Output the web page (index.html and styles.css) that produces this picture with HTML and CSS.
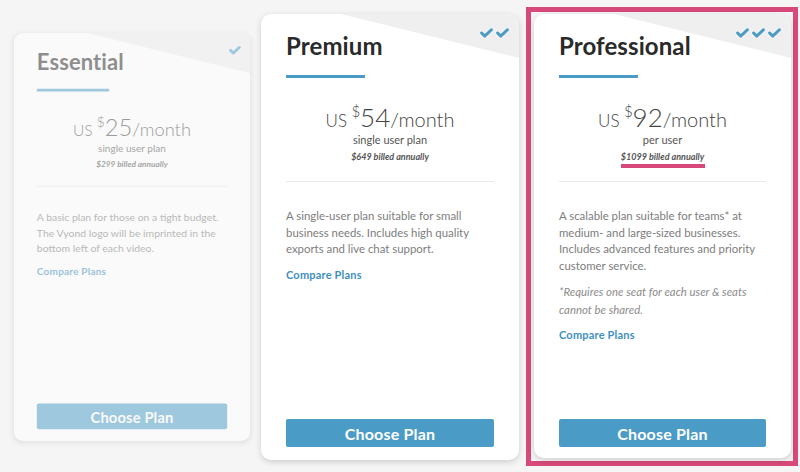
FILE: index.html
```html
<!DOCTYPE html>
<html>
<head>
<meta charset="utf-8">
<link rel="stylesheet" href="styles.css">
</head>
<body>
<div class="plans">
  <div class="card card-faded">
    <div class="corner"></div>
    <div class="checks">
      <svg class="check" viewBox="0 0 12 9"><polyline points="1.5,4.5 4.5,7.3 10.5,1.5"/></svg>
    </div>
    <h2 class="title">Essential</h2>
    <div class="rule"></div>
    <div class="price"><span class="cur">US</span> <span class="dollar">$</span><span class="amount">25</span><span class="per">/month</span></div>
    <div class="sub">single user plan</div>
    <div class="billed"><span>$299 billed annually</span></div>
    <div class="divider"></div>
    <p class="desc">A basic plan for those on a tight budget. The Vyond logo will be imprinted in the bottom left of each video.</p>
    <a class="compare">Compare Plans</a>
    <div class="spacer"></div>
    <button class="btn">Choose Plan</button>
  </div>

  <div class="card">
    <div class="corner"></div>
    <div class="checks">
      <svg class="check" viewBox="0 0 12 9"><polyline points="1.5,4.5 4.5,7.3 10.5,1.5"/></svg>
      <svg class="check" viewBox="0 0 12 9"><polyline points="1.5,4.5 4.5,7.3 10.5,1.5"/></svg>
    </div>
    <h2 class="title">Premium</h2>
    <div class="rule"></div>
    <div class="price"><span class="cur">US</span> <span class="dollar">$</span><span class="amount">54</span><span class="per">/month</span></div>
    <div class="sub">single user plan</div>
    <div class="billed"><span>$649 billed annually</span></div>
    <div class="divider"></div>
    <p class="desc">A single-user plan suitable for small business needs. Includes high quality exports and live chat support.</p>
    <a class="compare">Compare Plans</a>
    <div class="spacer"></div>
    <button class="btn">Choose Plan</button>
  </div>

  <div class="pro-wrap">
    <div class="card card-pro">
      <div class="corner"></div>
      <div class="checks">
        <svg class="check" viewBox="0 0 12 9"><polyline points="1.5,4.5 4.5,7.3 10.5,1.5"/></svg>
        <svg class="check" viewBox="0 0 12 9"><polyline points="1.5,4.5 4.5,7.3 10.5,1.5"/></svg>
        <svg class="check" viewBox="0 0 12 9"><polyline points="1.5,4.5 4.5,7.3 10.5,1.5"/></svg>
      </div>
      <h2 class="title">Professional</h2>
      <div class="rule"></div>
      <div class="price"><span class="cur">US</span> <span class="dollar">$</span><span class="amount">92</span><span class="per">/month</span></div>
      <div class="sub">per user</div>
      <div class="billed billed-marked"><span>$1099 billed annually</span></div>
      <div class="divider"></div>
      <p class="desc">A scalable plan suitable for teams* at medium- and large-sized businesses. Includes advanced features and priority customer service.</p>
      <p class="note">*Requires one seat for each user &amp; seats cannot be shared.</p>
      <a class="compare">Compare Plans</a>
      <div class="spacer"></div>
      <button class="btn">Choose Plan</button>
    </div>
  </div>
</div>
</body>
</html>
```

FILE: styles.css
```css
* { box-sizing: border-box; }

html, body {
  margin: 0;
  padding: 0;
  background: #f5f5f5;
  font-family: "Lato", "Liberation Sans", sans-serif;
}

.plans {
  display: flex;
  align-items: flex-start;
  padding: 14px 0 0 3px;
}

.card {
  position: relative;
  flex: none;
  width: 258px;
  height: 446px;
  background: #fff;
  border-radius: 10px;
  box-shadow: 0 2px 6px rgba(0, 0, 0, 0.16);
  display: flex;
  flex-direction: column;
  padding: 17px 25px 13px;
}

.card-faded {
  transform: scale(0.915);
  opacity: 0.5;
}

.pro-wrap {
  flex: none;
  margin: -7px 0 0 7px;
  border: 5px solid #d6497a;
  padding: 2px 2px 3px 3px;
}

.card-pro {
  width: 257px;
  height: 444px;
  padding-bottom: 11px;
}

.corner {
  position: absolute;
  top: 0;
  left: 0;
  right: 0;
  height: 44px;
  background: #efefef;
  border-top-right-radius: 10px;
  clip-path: polygon(31% 0, 100% 0, 100% 100%);
}

.checks {
  position: absolute;
  top: 14px;
  right: 10px;
  display: flex;
  gap: 3px;
}

.check {
  width: 13px;
  height: 10px;
  fill: none;
  stroke: #4a9cc7;
  stroke-width: 2.8;
  stroke-linecap: round;
  stroke-linejoin: round;
}

.title {
  position: relative;
  margin: 0;
  font-size: 24px;
  line-height: 30px;
  font-weight: 700;
  color: #2a2a2a;
  letter-spacing: 0.1px;
}

.rule {
  width: 79px;
  height: 3px;
  background: #4a9cc7;
  margin-top: 14px;
}

.price {
  margin-top: 20px;
  text-align: center;
  color: #444;
  font-weight: 300;
  line-height: 26px;
  white-space: nowrap;
}

.cur {
  font-size: 17px;
}

.dollar {
  font-size: 15px;
  vertical-align: 10px;
}

.amount {
  font-size: 26px;
}

.per {
  font-size: 20px;
}

.sub {
  text-align: center;
  font-size: 11px;
  line-height: 14px;
  color: #555;
  margin-top: -1px;
}

.billed {
  text-align: center;
  font-size: 9px;
  line-height: 12px;
  font-style: italic;
  font-weight: 700;
  color: #555;
  margin-top: 4px;
}

.billed span {
  display: inline-block;
  position: relative;
}

.billed-marked span::after {
  content: "";
  position: absolute;
  left: 0;
  right: -1px;
  bottom: -5px;
  height: 4px;
  background: #d6497a;
}

.divider {
  height: 1px;
  background: #e9e9e9;
  margin-top: 18px;
}

.desc {
  margin: 26px 0 0;
  font-size: 11.4px;
  line-height: 16.5px;
  color: #7d7d7d;
}

.note {
  margin: 9px 0 0;
  font-size: 11.4px;
  line-height: 17.5px;
  font-style: italic;
  color: #8c8c8c;
}

.compare {
  display: block;
  margin-top: 10px;
  font-size: 11px;
  line-height: 14px;
  font-weight: 700;
  color: #3f8fbf;
  letter-spacing: 0.2px;
}

.spacer {
  flex: 1;
}

.btn {
  height: 28px;
  border: none;
  border-radius: 2px;
  background: #4a9cc7;
  color: #fff;
  font-family: inherit;
  font-size: 16px;
  font-weight: 700;
  letter-spacing: 0.2px;
  padding: 0;
}
```
